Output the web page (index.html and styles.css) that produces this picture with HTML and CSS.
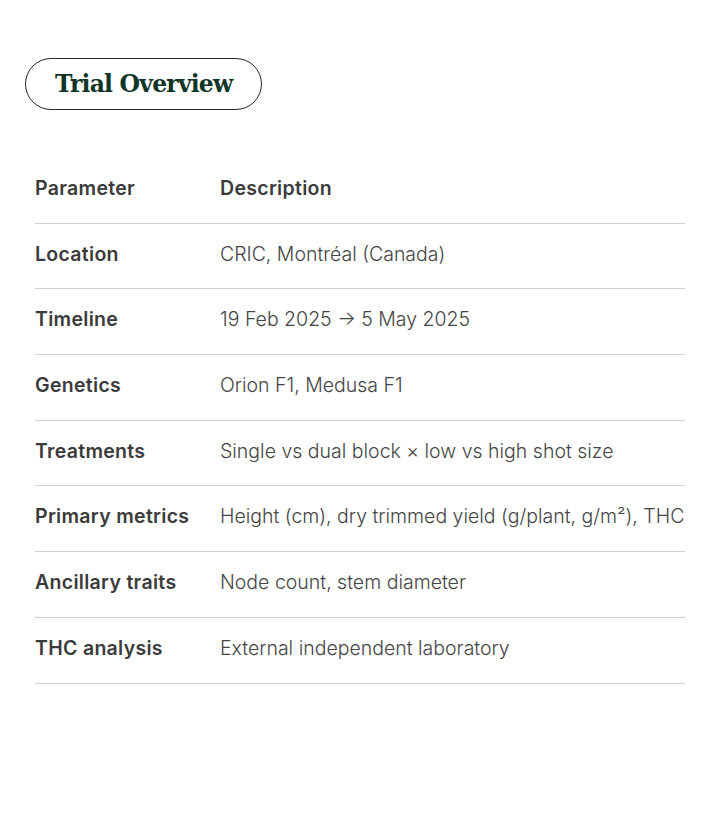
FILE: index.html
```html
<!DOCTYPE html>
<html lang="en">
<head>
<meta charset="utf-8">
<title>Trial Overview</title>
<link rel="stylesheet" href="styles.css">
</head>
<body>
<main class="page">
  <h1 class="pill">Trial Overview</h1>
  <table class="overview">
    <colgroup><col class="col-param"><col class="col-desc"></colgroup>
    <thead>
      <tr><th>Parameter</th><th>Description</th></tr>
    </thead>
    <tbody>
      <tr><th>Location</th><td>CRIC, Montréal (Canada)</td></tr>
      <tr><th>Timeline</th><td>19 Feb 2025 → 5 May 2025</td></tr>
      <tr><th>Genetics</th><td>Orion F1, Medusa F1</td></tr>
      <tr><th>Treatments</th><td>Single vs dual block × low vs high shot size</td></tr>
      <tr><th>Primary metrics</th><td>Height (cm), dry trimmed yield (g/plant, g/m²), THC</td></tr>
      <tr><th>Ancillary traits</th><td>Node count, stem diameter</td></tr>
      <tr><th>THC analysis</th><td>External independent laboratory</td></tr>
    </tbody>
  </table>
</main>
</body>
</html>
```
FILE: styles.css
```css
* { box-sizing: border-box; }
html, body { margin: 0; padding: 0; background: #fff; }
body { font-family: "Inter", "DejaVu Sans", sans-serif; color: #3a3a3a; }
.page { padding: 58px 35px 0 25px; }
.pill {
  display: inline-flex;
  align-items: center;
  margin: 0;
  height: 52px;
  padding: 0 29px;
  border: 1.2px solid #1f2a25;
  border-radius: 26px;
  font-family: "DejaVu Serif", "Liberation Serif", serif;
  font-weight: 700;
  font-size: 23.5px;
  letter-spacing: -0.8px;
  color: #0f3527;
}
.overview {
  margin: 48px 0 0 10px;
  width: 650px;
  table-layout: fixed;
  border-collapse: collapse;
}
.col-param { width: 185px; }
.overview tr { border-bottom: 1px solid #cfcfcf; }
.overview th, .overview td {
  text-align: left;
  padding: 18px 0 22.7px;
  line-height: 24px;
  white-space: nowrap;
  vertical-align: middle;
}
.overview th { font-weight: 600; font-size: 19.5px; letter-spacing: 0.3px; color: #3b3b3b; }
.overview td { font-weight: 300; font-size: 19.5px; color: #454545; }
```
